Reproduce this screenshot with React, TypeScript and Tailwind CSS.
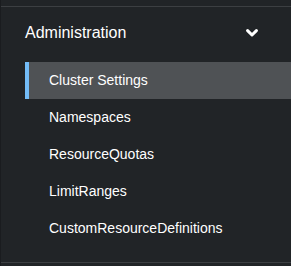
export default function App() {
  const items = [
    "Cluster Settings",
    "Namespaces",
    "ResourceQuotas",
    "LimitRanges",
    "CustomResourceDefinitions",
  ];
  return (
    <div
      className="w-[291px] h-[266px] bg-[#212427] border-l border-[#1a1c1f] pt-[6px] text-white"
      style={{ fontFamily: '"Liberation Sans", Arial, sans-serif' }}
    >
      <section className="border-t border-b border-[#3c3f42] pb-[15px]">
        <button className="flex h-[52px] w-full items-center justify-between pl-[24px] pr-[33px] text-[16px]">
          <span>Administration</span>
          <svg width="12" height="8" viewBox="0 0 12 8" fill="none">
            <path
              d="M1.6 1.6 L6 6 L10.4 1.6"
              stroke="#fff"
              strokeWidth="3"
              strokeLinecap="round"
              strokeLinejoin="round"
            />
          </svg>
        </button>
        <ul className="mt-[3px] pl-[24px]">
          {items.map((item, i) => (
            <li
              key={item}
              className={
                i === 0
                  ? "flex h-[37px] items-center border-l-4 border-[#73bcf7] bg-[#4f5255] pl-[20px] text-[14px]"
                  : "flex h-[37px] items-center pl-[24px] text-[14px]"
              }
            >
              {item}
            </li>
          ))}
        </ul>
      </section>
    </div>
  );
}
